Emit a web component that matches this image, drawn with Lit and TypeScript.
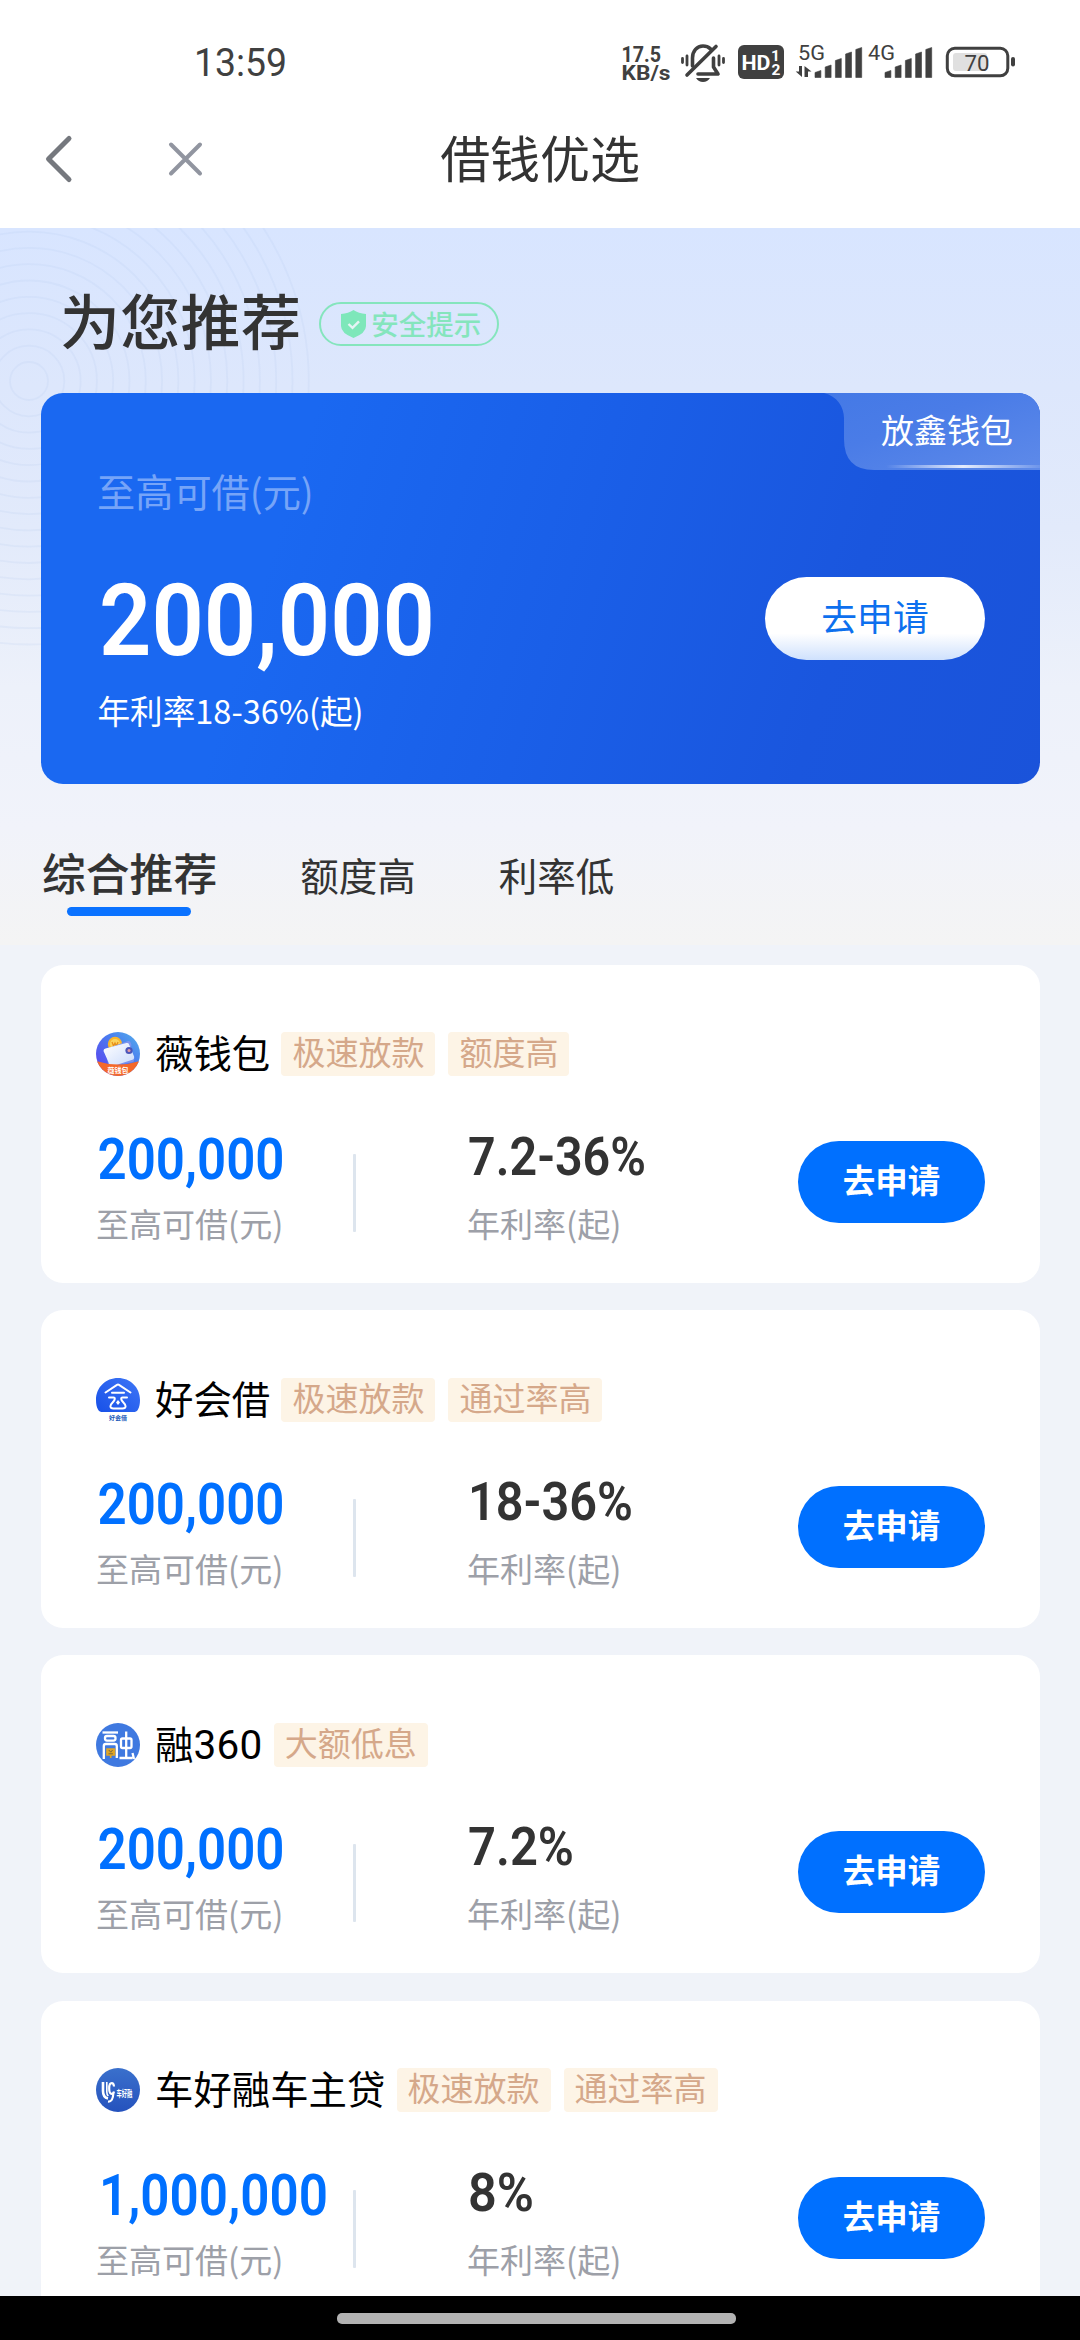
import { LitElement, html, svg, css, TemplateResult } from "lit";
import { customElement, property } from "lit/decorators.js";

interface Offer {
  logo: TemplateResult;
  name: TemplateResult | string;
  tags: string[];
  amount: string;
  amountWidth: number;
  rate: string;
  rateWidth: number;
}

const walletLogo = html`<svg class="logo" viewBox="0 0 44 44">
  <defs>
    <linearGradient id="wl" x1="0" y1="1" x2="1" y2="0"><stop offset="0.1" stop-color="#5a45ee" /><stop offset="0.6" stop-color="#4a7df0" /><stop offset="1" stop-color="#55b2ea" /></linearGradient>
    <linearGradient id="wp" x1="0" y1="0" x2="1" y2="1"><stop offset="0" stop-color="#ffffff" /><stop offset="1" stop-color="#c9dafb" /></linearGradient>
    <clipPath id="wc"><circle cx="22" cy="22" r="22" /></clipPath>
  </defs>
  <g clip-path="url(#wc)">
    <rect width="44" height="44" fill="url(#wl)" />
    <circle cx="19" cy="12" r="7.2" fill="#f8b62d" />
    <circle cx="19" cy="12" r="5" fill="#fcd45e" />
    <path d="M16 10l1.500 4 1.500-3 1.500 3 1.500-4" fill="none" stroke="#e8901c" stroke-width="1.300" />
    <path d="M10 17l22-8q2-.5 2.600 1.400l.8 2.600-2 9 5 5-1 3-25 5z" fill="#7c94ee" />
    <path d="M7.500 19q0-2 2-2.400l21-5.600q2-.4 2.600 1.400l5 12q.6 2-1 3l-20 6.500q-2.600.6-3.600-1.500z" fill="url(#wp)" />
    <circle cx="33" cy="18.500" r="3.600" fill="#4b55b8" /><circle cx="33" cy="18.500" r="1.500" fill="#e49aa0" />
    <path d="M0 29q22 7 44 0v15H0z" fill="#f4682a" />
    <text x="22" y="40.500" font-size="7" font-weight="700" fill="#fff" text-anchor="middle">薇钱包</text>
  </g>
</svg>`;

const huiLogo = html`<svg class="logo" viewBox="0 0 44 44">
  <defs><linearGradient id="hl" x1="0" y1="1" x2="1" y2="0"><stop offset="0" stop-color="#1750e8" /><stop offset="1" stop-color="#3f77f6" /></linearGradient></defs>
  <path d="M0 22C0 9 10 0 22 0s22 9 22 22c0 4-.6 7-2 9.500-1 2-2.500 2.500-5 2.500H7c-2.500 0-4-.5-5-2.500C.6 29 0 26 0 22z" fill="url(#hl)" />
  <g fill="none" stroke="#fff" stroke-width="2" stroke-linecap="round" stroke-linejoin="round">
    <path d="M9.500 14.500L21 6.800q1-.6 2 0L34.500 14.500" /><path d="M16 14.800h12" />
    <path d="M13 19.500h4.500c2 0 1.500 2.500-.5 4.500-3 3-4 6.500.5 6.500h9c4.500 0 3.500-3.500.5-6.500-2-2-2.500-4.500-.5-4.500H31" />
  </g>
  <path d="M22 22l2 2.500-2 2.500-2-2.500z" fill="#fff" />
  <text x="22" y="42.200" font-size="6" font-weight="700" fill="#2058b8" text-anchor="middle">好会借</text>
</svg>`;

const rongLogo = html`<svg class="logo" viewBox="0 0 44 44">
  <circle cx="22" cy="22" r="22" fill="#3f79e0" />
  <g fill="none" stroke="#fff" stroke-width="2.300" stroke-linejoin="round">
    <path d="M6.500 9.500h15.500" /><rect x="9" y="13" width="10.500" height="4.600" rx="2" />
    <path d="M7.800 36V23q0-2 2-2h9q2 0 2 2v12" />
    <rect x="25" y="15.500" width="10.500" height="9.500" rx="1.500" /><path d="M30.200 8.500v27M23.500 35h13M36.500 30l1.500 6" />
  </g>
  <path d="M11 26h7.500v6H11zM14.700 26v9M10.500 29h8.500" fill="#e0a526" stroke="#e0a526" stroke-width="1.600" />
  <path d="M12.800 27l1.900 2.200 1.900-2.200M12.500 30.800h4.400" fill="none" stroke="#77693f" />
</svg>`;

const carLogo = html`<svg class="logo" viewBox="0 0 44 44">
  <defs><linearGradient id="cl" x1="0" y1="0" x2="0" y2="1"><stop offset="0" stop-color="#3a70cc" /><stop offset="1" stop-color="#2552bd" /></linearGradient></defs>
  <circle cx="22" cy="22" r="22" fill="url(#cl)" />
  <g fill="none" stroke="#fff">
    <path d="M7 14v9q0 6.500 5 7.500" stroke-width="2.600" />
    <path d="M10.800 14v10q0 2.500 1.500 4" stroke-width="1.600" />
    <path d="M18 18.500q-.3-3.300-2.300-3.300-2.500 0-2.500 5.300t2.500 5.300q1.800 0 2.300-2.300" stroke-width="2.200" />
    <path d="M12 33.500q5 .5 5.300-8" stroke-width="2.200" />
  </g>
  <text transform="translate(20.500 28.500) scale(0.560 1)" font-size="9.500" font-weight="700" fill="#fff">车好融</text>
</svg>`;

const offers: Offer[] = [
  { logo: walletLogo, name: "薇钱包", tags: ["极速放款", "额度高"], amount: "200,000", amountWidth: 187, rate: "7.2-36%", rateWidth: 178 },
  { logo: huiLogo, name: "好会借", tags: ["极速放款", "通过率高"], amount: "200,000", amountWidth: 187, rate: "18-36%", rateWidth: 165 },
  { logo: rongLogo, name: html`融<span class="num">360</span>`, tags: ["大额低息"], amount: "200,000", amountWidth: 187, rate: "7.2%", rateWidth: 106 },
  { logo: carLogo, name: "车好融车主贷", tags: ["极速放款", "通过率高"], amount: "1,000,000", amountWidth: 229, rate: "8%", rateWidth: 66 },
];

const signalBars = (x: number) =>
  [7, 12.5, 19, 25.5, 30].map(
    (h, i) => svg`<path d="M${x + i * 10.2} ${77.5 - h + 2}l5.900 -2v${h}h-5.900z" stroke="#404040" stroke-width="0.600" stroke-linejoin="round"/>`
  );

@customElement("status-bar")
class StatusBar extends LitElement {
  static styles = css`
    :host { display: flex; justify-content: space-between; height: 90px; padding-left: 193px; font-family: Roboto, sans-serif; }
    svg { display: block; }
  `;
  render() {
    return html`
      <svg width="100" height="90"><text x="1" y="76" font-size="39.500" fill="#404040" textLength="93" lengthAdjust="spacingAndGlyphs">13:59</text></svg>
      <svg width="480" height="90" viewBox="600 0 480 90" fill="#404040">
        <g font-weight="700">
          <text x="621.500" y="62" font-size="21.500" textLength="39.500" lengthAdjust="spacingAndGlyphs">17.5</text>
          <text x="621.500" y="80" font-size="20" textLength="49" lengthAdjust="spacingAndGlyphs">KB/s</text>
        </g>
        <g fill="none" stroke="#404040" stroke-width="3.600" stroke-linecap="round" stroke-linejoin="round">
          <path d="M692.500 66V58c0-7 4.500-12 10.500-12 3 0 5.500 1 7.500 2.800" />
          <path d="M716 46.500L687 75" />
          <path d="M713.500 58v9l4.500 7h-20" />
          <path d="M687 56v9M682.500 58.500v4M719 56v9M723.500 58.500v4" stroke-width="2.800" />
        </g>
        <path d="M696 78h14q-2.500 4-7 4t-7-4z" />
        <rect x="738" y="45" width="46" height="34" rx="6" />
        <g fill="#fff" font-weight="700">
          <text x="741.500" y="69.500" font-size="21" textLength="29" lengthAdjust="spacingAndGlyphs">HD</text>
          <text x="771" y="60.500" font-size="15.500">1</text><text x="771.500" y="75" font-size="15.500">2</text>
        </g>
        <g font-size="20.500">
          <text x="798" y="60" textLength="27" lengthAdjust="spacingAndGlyphs">5G</text>
          <text x="868" y="60" textLength="27" lengthAdjust="spacingAndGlyphs">4G</text>
        </g>
        <path d="M799 66h3v11l-6.300-5.500h3.300zM804.500 77v-11l7 5.500h-3.500v5.500z" />
        ${signalBars(815)}${signalBars(885)}
        <rect x="947.300" y="48.300" width="60.500" height="27.500" rx="7.500" fill="none" stroke="#404040" stroke-width="3" />
        <rect x="953" y="53" width="34" height="18" rx="3" fill="#e0e0e0" />
        <rect x="1011" y="57" width="4" height="9.500" rx="2" />
        <text x="964.500" y="70.500" font-size="22.500" textLength="25" lengthAdjust="spacingAndGlyphs">70</text>
      </svg>`;
  }
}

@customElement("loan-card")
class LoanCard extends LitElement {
  @property({ attribute: false }) offer!: Offer;
  static styles = css`
    :host {
      display: block; box-sizing: border-box; height: 318px; padding: 67.500px 55px 0; border-radius: 22px; background: #fff;
      font-family: "Noto Sans CJK SC", sans-serif;
    }
    .head { display: flex; align-items: center; height: 44px; }
    .logo { width: 44px; height: 44px; flex: none; }
    .name { height: 44px; margin: 0 -3px 0 15px; padding-right: 1.200px; font-size: 38.400px; line-height: 38px; color: #000; white-space: nowrap; }
    .num { font-family: Roboto, sans-serif; font-size: 40.500px; line-height: 1; letter-spacing: 0.300px; }
    .tag { margin-left: 13px; padding: 0 11px; height: 44px; line-height: 38px; border-radius: 4px; background: #fdf4e6; color: #d5a88a; font-size: 33px; font-weight: 400; white-space: nowrap; }
    .body { display: flex; margin-top: 48.300px; }
    .max { width: 256.500px; }
    .rate { margin-left: 112.500px; }
    .figure { display: block; height: 78px; overflow: visible; font-family: Roboto, sans-serif; font-weight: 600; }
    .label { height: 44px; line-height: 41px; font-size: 33px; font-weight: 400; color: #9da0a8; white-space: nowrap; }
    .rate .label { margin-left: -1px; }
    .line { width: 3px; height: 78px; margin-top: 29px; border-radius: 1px; background: #dde5ee; }
    .go {
      width: 187px; height: 82px; margin: 16px 0 0 auto; padding: 0 0 7px; border: 0; border-radius: 41px; background: #0070ff; color: #fff;
      font: 700 32.500px "Noto Sans CJK SC", sans-serif;
    }
  `;
  render() {
    const o = this.offer;
    return html`
      <div class="head">${o.logo}<div class="name">${o.name}</div>${o.tags.map((t) => html`<span class="tag">${t}</span>`)}</div>
      <div class="body">
        <div class="max">
          <svg class="figure" width="250"><text x=${o.amount.startsWith("1") ? 3 : 1.5} y="54.300" font-size="57.600" fill="#0070ff" textLength=${o.amountWidth} lengthAdjust="spacingAndGlyphs">${o.amount}</text></svg>
          <div class="label">至高可借(元)</div>
        </div>
        <div class="line"></div>
        <div class="rate">
          <svg class="figure" width="200"><text x="0" y="49.600" font-size="53" fill="#333" textLength=${o.rateWidth} lengthAdjust="spacingAndGlyphs">${o.rate}</text></svg>
          <div class="label">年利率(起)</div>
        </div>
        <button class="go">去申请</button>
      </div>`;
  }
}

@customElement("app-root")
class AppRoot extends LitElement {
  static styles = css`
    :host { display: flex; flex-direction: column; width: 1080px; height: 2340px; overflow: hidden; background: #f0f3f9; font-family: "Noto Sans CJK SC", sans-serif; color: #333; }
    header { flex: none; height: 228px; background: #fff; }
    .nav { display: grid; grid-template-columns: 1fr auto 1fr; align-items: center; height: 138px; }
    .nav h1 { margin: 0; font-size: 50px; font-weight: 400; line-height: 133px; height: 138px; letter-spacing: -0.100px; }
    .nav svg { display: block; }
    .top {
      position: relative; flex: none; height: 717px;
      background: linear-gradient(180deg, #d8e5ff 0, #dde7fc 160px, #e2eafb 300px, #edf1fa 460px, #f1f3fa 600px, #f4f4f4 717px);
    }
    .rings { position: absolute; left: 0; top: 0; }
    .heading { position: relative; display: flex; align-items: center; height: 141px; padding: 24px 0 0 60px; }
    .heading h2 { margin: 0; font-size: 60px; font-weight: 500; line-height: 60px; letter-spacing: 0.300px; height: 67px; }
    .safe { display: flex; align-items: center; box-sizing: border-box; width: 180px; height: 44px; margin: 3px 0 0 18px; padding-left: 18px; border: 2px solid #85e5bd; border-radius: 22px; color: #85e5bd; font-size: 27.500px; font-weight: 500; line-height: 38px; white-space: nowrap; }
    .safe svg { flex: none; margin-right: 3px; }
    .safe b { font-weight: 500; height: 41px; }
    .hero { position: relative; display: flex; box-sizing: border-box; width: 999px; height: 391px; margin-left: 41px; padding: 76px 55px 0 56px; border-radius: 22px; overflow: hidden; background: linear-gradient(107deg, #1a68f1 25%, #1a5fe8 52%, #1a56de 78%, #1a53da 100%); }
    .cap { height: 48px; line-height: 44px; font-size: 38.200px; font-weight: 400; color: #76a4f8; }
    .big { display: block; margin: 38px 0 0 0; font-family: Roboto, sans-serif; font-weight: 600; }
    .small { font-family: "Noto Sans CJK SC", sans-serif; }
    .badge { position: absolute; right: 0; top: 0; width: 216px; height: 77px; }
    .badge svg { position: absolute; left: 0; top: 0; }
    .badge span { position: relative; display: block; padding-left: 57px; font-size: 33px; line-height: 72px; color: #fff; white-space: nowrap; }
    .apply { width: 220px; height: 83px; margin: 108px 0 0 auto; padding: 0 0 8px; border: 0; border-radius: 41.500px; background: linear-gradient(180deg, #fff 68%, #cfe1fd 100%); color: #0d70ee; font: 400 35.800px "Noto Sans CJK SC", sans-serif; }
    .tabs { position: relative; display: flex; align-items: baseline; gap: 83px; padding: 56px 0 0 42px; }
    .tab { font-size: 38.500px; line-height: 64px; }
    .tab.on { position: relative; font-size: 43.800px; font-weight: 500; }
    .tab.on::after { content: ""; position: absolute; left: 25px; top: 67px; width: 124px; height: 9px; border-radius: 4.500px; background: #0a72ff; }
    .list { flex: 1; min-height: 0; overflow: hidden; display: flex; flex-direction: column; gap: 27.300px; padding: 19.900px 40px 0 41px; }
    .list loan-card { flex: none; }
    .home { flex: none; display: flex; justify-content: center; height: 44px; padding-right: 7px; background: #000; }
    .home i { width: 399px; height: 11px; margin-top: 17px; border-radius: 5px; background: #b2b2b2; }
  `;
  render() {
    return html`
      <header>
        <status-bar></status-bar>
        <div class="nav">
          <svg width="240" height="138" fill="none" stroke-linecap="round">
            <path d="M69 48.500L48.500 69 69 89.500" stroke="#75787e" stroke-width="5" stroke-linejoin="round" />
            <path d="M171 54.500l29 29M200 54.500l-29 29" stroke="#9195a0" stroke-width="4" />
          </svg>
          <h1>借钱优选</h1>
        </div>
      </header>
      <section class="top">
        <svg class="rings" width="320" height="420" fill="none" stroke="#b9cdf0" stroke-opacity="0.200" stroke-width="1.800">
          ${Array.from({ length: 17 }, (_, i) => svg`<circle cx="29" cy="153" r=${19 + i * 16.3} />`)}
        </svg>
        <div class="heading">
          <h2>为您推荐</h2>
          <span class="safe">
            <svg width="29" height="30" viewBox="0 0 29 30"><path d="M14.500 1q5 3.500 12.500 4v12q0 7-12.500 12Q2 24 2 17V5q7.500-.5 12.500-4z" fill="#7ee7ba" /><path d="M9.500 15l4 3.800 6.500-6.500" fill="none" stroke="#e6f4f5" stroke-width="2.400" /></svg><b>安全提示</b>
          </span>
        </div>
        <div class="hero">
          <div>
            <div class="cap">至高可借(元)</div>
            <svg class="big" width="420" height="190" fill="#fff">
              <text x="2" y="99.500" font-size="100.700" textLength="336" lengthAdjust="spacingAndGlyphs">200,000</text>
              <text class="small" x="0.500" y="168.500" font-size="33" font-weight="400" textLength="266" lengthAdjust="spacingAndGlyphs">年利率18-36%(起)</text>
            </svg>
          </div>
          <button class="apply">去申请</button>
          <div class="badge">
            <svg width="216" height="77">
              <defs>
                <linearGradient id="bg" x1="0" y1="0" x2="1" y2="1"><stop offset="0" stop-color="#4479e6" /><stop offset="0.400" stop-color="#4a7ce7" /><stop offset="1" stop-color="#5e8ae9" /></linearGradient>
                <linearGradient id="shine"><stop offset="0" stop-color="#fff" stop-opacity="0" /><stop offset="0.500" stop-color="#fff" stop-opacity="0.850" /><stop offset="1" stop-color="#fff" stop-opacity="0.100" /></linearGradient>
              </defs>
              <path d="M0 0C13 3 20 14 20 25v21q0 31 30 31h166V0z" fill="url(#bg)" />
              <rect x="62" y="72" width="154" height="3" fill="url(#shine)" />
            </svg>
            <span>放鑫钱包</span>
          </div>
        </div>
        <div class="tabs"><span class="tab on">综合推荐</span><span class="tab">额度高</span><span class="tab">利率低</span></div>
      </section>
      <main class="list">${offers.map((o) => html`<loan-card .offer=${o}></loan-card>`)}</main>
      <div class="home"><i></i></div>`;
  }
}
